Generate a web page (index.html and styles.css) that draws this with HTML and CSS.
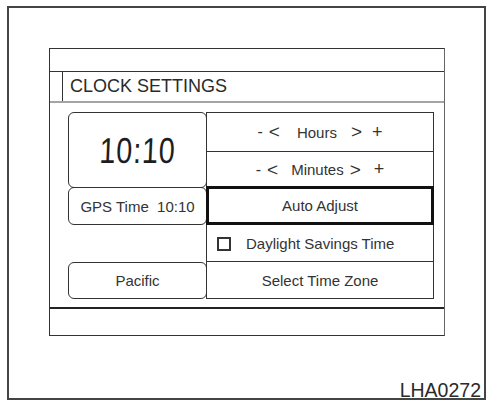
FILE: index.html
```html
<!DOCTYPE html>
<html>
<head>
<meta charset="utf-8">
<link rel="stylesheet" href="styles.css">
</head>
<body>
<div class="frame">
  <div class="screen">
    <div class="topbar"></div>
    <div class="title">
      <div class="title-tab"></div>
      <div class="title-text">CLOCK SETTINGS</div>
    </div>
    <div class="content">
      <div class="left">
        <div class="rbox clock"><span class="digits">10:10</span></div>
        <div class="rbox gps">GPS Time&nbsp;&nbsp;10:10</div>
        <div class="spacer"></div>
        <div class="rbox zone">Pacific</div>
      </div>
      <div class="right">
        <div class="btn hours"><span>-</span><span class="m6">&lt;</span><span class="m17">Hours</span><span class="m14">&gt;</span><span class="m10">+</span></div>
        <div class="btn minutes"><span>-</span><span class="m6">&lt;</span><span class="m13">Minutes</span><span class="m6b">&gt;</span><span class="m15">+</span></div>
        <div class="btn auto">Auto Adjust</div>
        <div class="btn dst"><span class="check"></span><span>Daylight Savings Time</span></div>
        <div class="btn tz">Select Time Zone</div>
      </div>
    </div>
    <div class="bottombar"></div>
  </div>
  <div class="code">LHA0272</div>
</div>
</body>
</html>
```
FILE: styles.css
```css
html, body {
  margin: 0;
  padding: 0;
  background: #fff;
}
body {
  font-family: "Liberation Sans", Arial, sans-serif;
  color: #333;
}
.frame {
  box-sizing: border-box;
  margin: 6px 0 0 7px;
  width: 479px;
  height: 394px;
  border: 2px solid #444;
  display: flex;
  flex-direction: column;
}
.screen {
  box-sizing: border-box;
  margin: 40px 0 0 40px;
  width: 396px;
  height: 288px;
  border: 1px solid #333;
  border-right-color: #666;
  display: flex;
  flex-direction: column;
}
.topbar {
  height: 22px;
  border-bottom: 1px solid #333;
  flex: none;
}
.title {
  box-sizing: border-box;
  height: 31px;
  border-bottom: 2px solid #a4a4a4;
  display: flex;
  flex: none;
}
.title-tab {
  width: 12px;
  border-right: 1px solid #333;
}
.title-text {
  padding-left: 7px;
  font-size: 18px;
  line-height: 29px;
  color: #2a2a2a;
}
.content {
  flex: 1;
  display: flex;
  padding: 9px 0 0 18px;
  box-sizing: border-box;
}
.left {
  width: 139px;
  display: flex;
  flex-direction: column;
  flex: none;
}
.rbox {
  box-sizing: border-box;
  border: 1px solid #333;
  border-radius: 6px;
  display: flex;
  align-items: center;
  justify-content: center;
  font-size: 15px;
}
.clock {
  height: 76px;
}
.digits {
  display: inline-block;
  font-size: 36px;
  line-height: 36px;
  color: #1e1e1e;
  letter-spacing: 1px;
  transform: scale(0.8, 1) skewX(-3deg);
  margin-top: 1px;
}
.gps {
  height: 38px;
  margin-top: -1px;
}
.spacer {
  height: 37px;
}
.zone {
  height: 37px;
}
.right {
  width: 228px;
  margin-left: -1px;
  display: flex;
  flex-direction: column;
  flex: none;
}
.btn {
  box-sizing: border-box;
  border: 1px solid #333;
  display: flex;
  align-items: center;
  justify-content: center;
  font-size: 15px;
  margin-top: -1px;
}
.hours {
  height: 40px;
  margin-top: 0;
}
.minutes {
  height: 37px;
}
.auto {
  height: 39px;
  border: 3px solid #111;
  margin-top: -2px;
  position: relative;
  z-index: 1;
}
.dst {
  height: 38px;
  justify-content: flex-start;
  padding-left: 10px;
}
.tz {
  height: 38px;
}
.check {
  box-sizing: border-box;
  width: 14px;
  height: 14px;
  border: 2px solid #333;
  margin-right: 15px;
  margin-top: 2px;
}
.hours span, .minutes span {
  font-size: 15px;
}
.hours span:first-child, .minutes span:first-child {
  font-size: 16px;
}
.m6 { margin-left: 6px; font-size: 19px !important; }
.m6b { margin-left: 6px; font-size: 19px !important; }
.m10 { margin-left: 10px; font-size: 18px !important; }
.m13 { margin-left: 13px; }
.m14 { margin-left: 14px; font-size: 19px !important; }
.m15 { margin-left: 13px; font-size: 18px !important; }
.m17 { margin-left: 17px; }
.bottombar {
  height: 28px;
  border-top: 2px solid #222;
  box-sizing: border-box;
  flex: none;
}
.code {
  margin-top: auto;
  text-align: right;
  padding-right: 3px;
  font-size: 19.5px;
  line-height: 16px;
  color: #2a2a2a;
}
```
